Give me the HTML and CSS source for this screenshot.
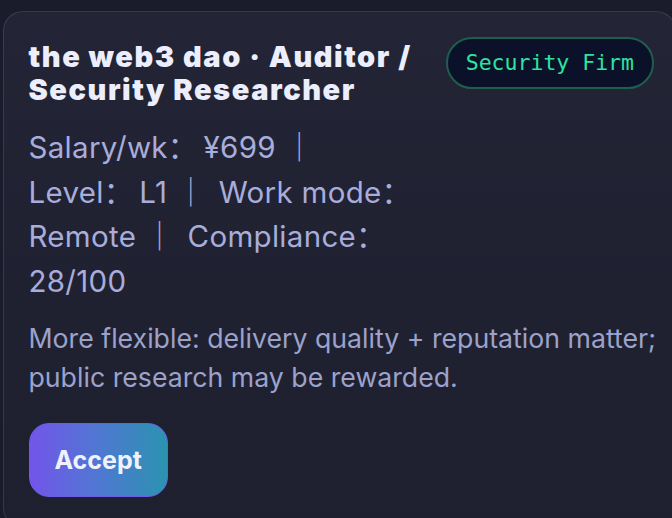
FILE: index.html
```html
<!DOCTYPE html>
<html lang="en">
<head>
<meta charset="utf-8">
<title>Job offer</title>
<link rel="stylesheet" href="styles.css">
</head>
<body>
<div class="card">
  <div class="top">
    <div class="main">
      <h2 class="title">the web3 dao · Auditor / Security Researcher</h2>
      <div class="meta">Salary/wk<span class="c">：</span>¥699 <span class="sep">｜</span><br>Level<span class="c">：</span>L1 <span class="sep">｜</span> Work mode<span class="c">：</span><br>Remote <span class="sep">｜</span> Compliance<span class="c">：</span><br>28/100</div>
    </div>
    <span class="badge">Security Firm</span>
  </div>
  <p class="desc">More flexible: delivery quality + reputation matter; public research may be rewarded.</p>
  <div class="actions">
    <button class="btn">Accept</button>
  </div>
</div>
</body>
</html>
```

FILE: styles.css
```css
html, body {
  margin: 0;
  padding: 0;
  overflow: hidden;
}
body {
  background: #1a1c2c;
  width: 672px;
  height: 518px;
  font-family: Inter, "Noto Sans CJK SC", sans-serif;
}
.card {
  margin: 11px 0 0 3px;
  width: 673px;
  box-sizing: border-box;
  border: 1.5px solid rgba(255, 255, 255, 0.11);
  border-radius: 20px;
  background: linear-gradient(180deg, #232536 0%, #1f2131 60%, #1e2030 100%);
  padding: 26px 14px 30px 24.5px;
}
.top {
  display: flex;
  align-items: flex-start;
}
.main {
  flex: none;
  width: 400px;
  padding-top: 2px;
}
.title {
  margin: 0;
  font-size: 29px;
  line-height: 33px;
  font-weight: 900;
  letter-spacing: 1.55px;
  color: #eceefd;
}
.meta {
  margin-top: 19px;
  font-size: 29.5px;
  line-height: 44.7px;
  letter-spacing: 0.3px;
  color: #a8addb;
}
.c {
  margin-right: 0.2em;
}
.sep {
  margin-right: 0.15em;
}
.badge {
  flex-shrink: 0;
  margin: -1px 7px 0 auto;
  padding: 11px 18px;
  border: 2px solid #1e5e4f;
  border-radius: 999px;
  background: #0a1128;
  color: #2fe3a0;
  font-family: "DejaVu Sans Mono", monospace;
  font-size: 21.5px;
  line-height: 26px;
  white-space: nowrap;
}
.desc {
  margin: 15px 0 0 0;
  font-size: 26.7px;
  line-height: 39px;
  color: #9ca2ca;
}
.actions {
  margin-top: 26px;
  display: flex;
}
.btn {
  font-family: Inter, sans-serif;
  font-size: 25px;
  font-weight: 700;
  color: #f0f1ff;
  padding: 0 25px;
  height: 74px;
  border-radius: 20px;
  border: 1.5px solid #6b5de6;
  background: linear-gradient(90deg, #7355ea 0%, #4f78d2 50%, #2b93b0 100%);
  cursor: pointer;
}
```
